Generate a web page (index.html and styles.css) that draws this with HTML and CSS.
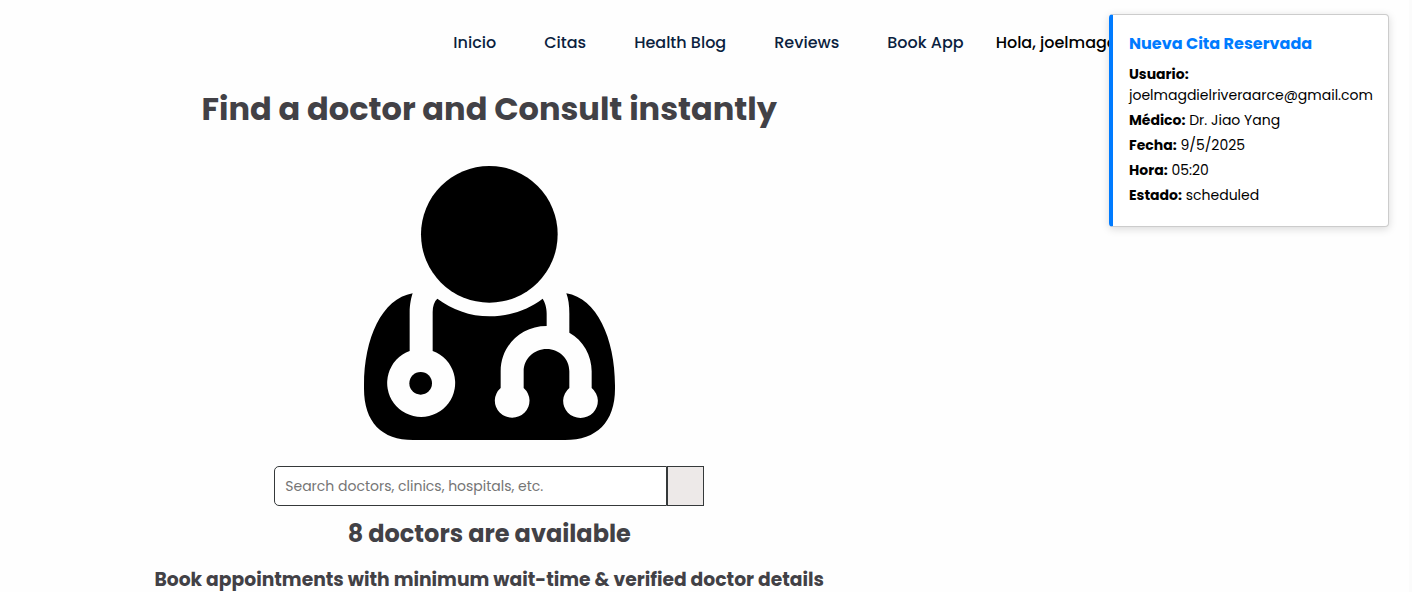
FILE: index.html
```html
<!DOCTYPE html>
<html lang="es">
<head>
<meta charset="utf-8">
<meta name="viewport" content="width=device-width, initial-scale=1">
<title>Find a doctor</title>
<link rel="stylesheet" href="styles.css">
</head>
<body>
<header class="site-header">
  <nav class="nav">
    <a class="nav-link" href="#inicio">Inicio</a>
    <a class="nav-link" href="#citas">Citas</a>
    <a class="nav-link" href="#blog">Health Blog</a>
    <a class="nav-link" href="#reviews">Reviews</a>
    <a class="nav-link" href="#app">Book App</a>
  </nav>
  <span class="greeting">Hola, joelmagdiel</span>
</header>
<main class="page">
  <section class="hero">
    <h1 class="hero-title">Find a doctor and Consult instantly</h1>
    <svg class="hero-icon" viewBox="42 32 753 822" role="img" aria-label="Doctor">
      <circle cx="418" cy="237" r="205"/>
      <path d="M188 414C184 425 179 448 179 470V587A102 102 0 1 0 248 587V470C248 452 253 438 262 430C305 462 360 483 419 483C478 483 535 463 578 430C585 442 590 455 590 475V512C512 512 452 572 452 648V698A52 51 0 1 0 521 698V648C521 610 552 581 590 581C628 581 658 610 658 648V698A52 51 0 1 0 725 698V648C725 600 700 555 658 532V475C658 450 655 430 649 414C740 428 795 550 795 690V700C795 800 740 854 645 854H190C95 854 42 800 42 700V690C42 550 95 430 188 414Z"/>
      <circle cx="212" cy="684" r="34"/>
    </svg>
    <form class="search">
      <input class="search-input" type="search" aria-label="Search doctors" placeholder="Search doctors, clinics, hospitals, etc.">
      <button class="search-button" type="button" aria-label="Search"></button>
    </form>
    <h2 class="hero-count">8 doctors are available</h2>
    <h3 class="hero-note">Book appointments with minimum wait-time &amp; verified doctor details</h3>
  </section>
</main>
<aside class="notice">
  <h3 class="notice-title">Nueva Cita Reservada</h3>
  <p class="notice-row"><strong>Usuario:</strong> joelmagdielriveraarce@gmail.com</p>
  <p class="notice-row"><strong>Médico:</strong> Dr. Jiao Yang</p>
  <p class="notice-row"><strong>Fecha:</strong> 9/5/2025</p>
  <p class="notice-row"><strong>Hora:</strong> 05:20</p>
  <p class="notice-row"><strong>Estado:</strong> scheduled</p>
</aside>
</body>
</html>
```
FILE: styles.css
```css
* {
  box-sizing: border-box;
  margin: 0;
}

body {
  min-height: 100vh;
  border-right: 3px solid #fbfbfb;
  background: #fefefe;
  color: #000;
  font-family: Poppins, Inter, sans-serif;
  font-size: 16px;
  overflow: hidden;
}

.site-header {
  display: flex;
  align-items: center;
  justify-content: flex-end;
  gap: 32px;
  height: 85px;
  padding-right: 273px;
  font-weight: 500;
  white-space: nowrap;
}

.nav {
  display: flex;
  gap: 48px;
}

.nav-link {
  color: #0b1f3f;
  text-decoration: none;
}

.page {
  display: grid;
  grid-template-columns: 25fr 11fr;
}

.hero {
  display: flex;
  flex-direction: column;
  align-items: center;
  color: #424146;
  text-align: center;
}

.hero-title {
  font-size: 32px;
  line-height: 48px;
}

.hero-icon {
  width: 251px;
  height: 274px;
  margin: 33px 0 26px;
  fill: #000;
}

.search {
  display: flex;
  width: 430px;
  height: 40px;
}

.search-input {
  flex: 1;
  min-width: 0;
  padding: 0 10px;
  border: 1px solid #35393a;
  border-radius: 5px 0 0 5px;
  background: #fff;
  font: inherit;
  font-size: 14px;
  appearance: none;
}

.search-input::placeholder {
  color: #757575;
}

.search-button {
  width: 37px;
  padding: 0;
  border: 1px solid #35393a;
  background: #ede9e8;
}

.hero-count {
  margin-top: 10px;
  font-size: 24px;
  line-height: 36px;
}

.hero-note {
  margin-top: 14px;
  line-height: 28px;
}

.notice {
  position: absolute;
  top: 14px;
  right: 23px;
  width: 280px;
  padding: 16px 15px 16px 16px;
  border: 1px solid #ccc;
  border-left: 4px solid #007bff;
  border-radius: 4px;
  background: #fff;
  box-shadow: 0 2px 8px rgba(0, 0, 0, 0.15);
  font-size: 14px;
  line-height: 21px;
}

.notice-title {
  margin-bottom: 8px;
  color: #007bff;
  font-size: 16px;
  line-height: 25px;
}

.notice-row {
  margin-bottom: 4px;
}
```
